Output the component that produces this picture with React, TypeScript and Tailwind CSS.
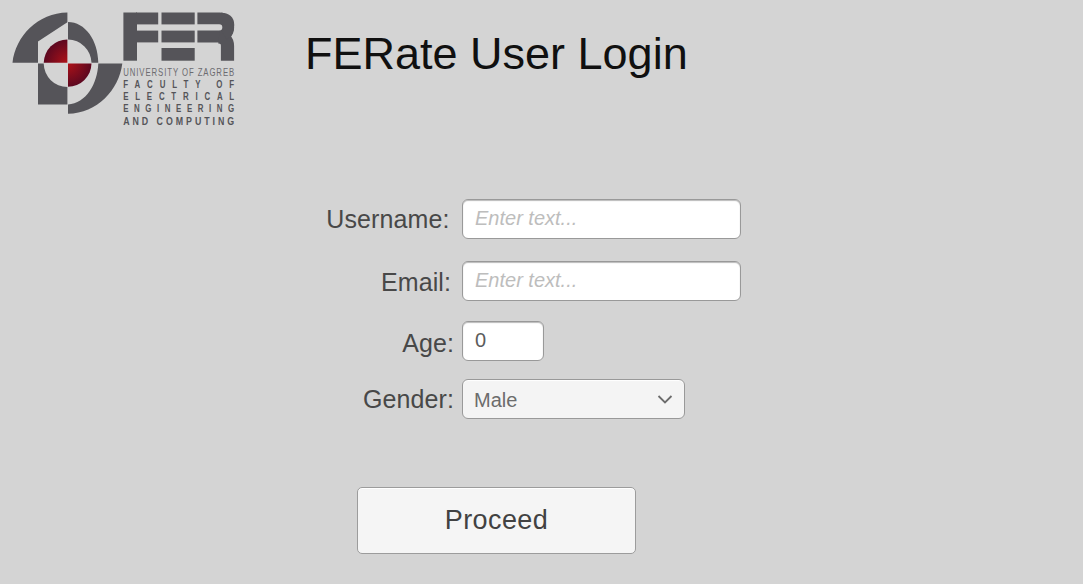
import type { ReactNode } from "react";

const GRAY = "#555459";

function Caption({ y, size, weight, sx, width, fill = GRAY, children }: { y: number; size: number; weight: number; sx: number; width: number; fill?: string; children: string }) {
  return (
    <text
      transform={`translate(123.2 ${y}) scale(${sx} 1)`}
      fontSize={size}
      fontWeight={weight}
      textLength={width / sx}
      lengthAdjust="spacing"
      fill={fill}
    >
      {children}
    </text>
  );
}

function Logo() {
  return (
    <svg className="block h-[130px] w-[240px] shrink-0 font-['Liberation_Sans',sans-serif]" viewBox="0 0 240 130" role="img" aria-label="FER">
      <defs>
        <radialGradient id="core" gradientUnits="userSpaceOnUse" cx="67.7" cy="63" r="24">
          <stop offset="0" stopColor="#b01218" />
          <stop offset="1" stopColor="#5c0820" />
        </radialGradient>
      </defs>
      <g fill={GRAY}>
        <path d="M67.4 12.5V22.3L38 41.6V62.8H12.5C15.5 36 38 13 67.4 12.5Z" />
        <path d="M68 22C85 22 98 40 98.3 62.8H91.5A23.8 23.8 0 0 0 68 39.5Z" />
        <path d="M38 63.6H43.7A23.8 23.8 0 0 0 67.4 87V104.4H38Z" />
        <path d="M98.3 63.6H122.3C119 90 97 113.5 68 113.8V104.5C86 103.5 97.5 84 98.3 63.6Z" />
      </g>
      <path d="M67.4 62.8H43.7A23.7 23.7 0 0 1 67.4 39.6Z" fill="url(#core)" />
      <path d="M68 63.6H91.5A23.7 23.7 0 0 1 68 86.8Z" fill="url(#core)" />
      <g fill={GRAY}>
        <rect x="123.4" y="12.5" width="13.6" height="48.2" />
        <rect x="136" y="12.5" width="22.2" height="11.9" />
        <rect x="136" y="30.6" width="22.2" height="11.8" />
        <rect x="161.5" y="12.5" width="33.2" height="11.9" />
        <rect x="161.5" y="30.6" width="33.2" height="11.8" />
        <rect x="161.5" y="48" width="33.2" height="12.7" />
      </g>
      <g fill="none" stroke={GRAY}>
        <path d="M197.4 18.45H219.5A9.03 9.03 0 0 1 219.5 36.5H197.4" strokeWidth="11.8" />
        <path d="M219 37Q227.5 38 227.5 46V60.7" strokeWidth="13.2" />
        <path d="M221 18Q229 18 229 25T224 35" strokeWidth="10.5" />
      </g>
      <Caption y={75.8} size={10.8} weight={400} sx={0.72} width={111} fill="#6c6b70">UNIVERSITY OF ZAGREB</Caption>
      <Caption y={88.2} size={11.3} weight={700} sx={0.7} width={111}>FACULTY OF</Caption>
      <Caption y={100.2} size={11.3} weight={700} sx={0.7} width={111}>ELECTRICAL</Caption>
      <Caption y={112.2} size={11.3} weight={700} sx={0.7} width={111}>ENGINEERING</Caption>
      <Caption y={125.2} size={11.3} weight={700} sx={0.78} width={111}>AND COMPUTING</Caption>
    </svg>
  );
}

function Row({ label, className, labelClass, children }: { label: string; className: string; labelClass: string; children: ReactNode }) {
  return (
    <div className={`flex h-10 items-start ${className}`}>
      <div className={`w-[462px] shrink-0 text-right text-[25px] leading-10 tracking-[0.1px] text-[#484848] ${labelClass}`}>{label}</div>
      {children}
    </div>
  );
}

const box =
  "h-10 rounded-[6px] border border-[#999999] bg-white px-3 pb-[2px] text-[20px] text-[#5c5c5c] shadow-[inset_0_1px_1px_#bbbbbb] outline-none";

export default function App() {
  return (
    <main className="h-[584px] w-[1083px] overflow-hidden bg-[#d4d4d4] font-['Liberation_Sans',Arial,sans-serif]">
      <header className="flex h-[199px] items-start">
        <Logo />
        <h1 className="ml-[65px] mt-[26px] whitespace-nowrap text-[45px] leading-[56px] text-[#101010]">FERate User Login</h1>
      </header>
      <form>
        <Row label="Username:" className="" labelClass="pr-[12.5px]">
          <input aria-label="Username" placeholder="Enter text..." className={`${box} w-[279px] italic placeholder:text-[#bdbdbd]`} />
        </Row>
        <Row label="Email:" className="mt-[22px]" labelClass="pr-[11px] pt-[1px]">
          <input aria-label="Email" placeholder="Enter text..." className={`${box} w-[279px] italic placeholder:text-[#bdbdbd]`} />
        </Row>
        <Row label="Age:" className="mt-5" labelClass="pr-[8px] pt-[2px]">
          <input aria-label="Age" defaultValue="0" className={`${box} w-[82px]`} />
        </Row>
        <Row label="Gender:" className="mt-[18px]" labelClass="pr-[8px]">
          <button type="button" className="flex h-10 w-[223px] items-center justify-between rounded-[6px] border border-[#999999] bg-[#f4f4f4] pl-[11px] pr-[11px] pt-[2px] text-[20px] text-[#6c6c6c] shadow-[inset_0_1px_1px_#ffffff]">
            Male
            <svg className="h-3 w-4" viewBox="0 0 16 12" fill="none" stroke="#6c6c6c" strokeWidth="1.8">
              <path d="M1.5 2L8 8.5L14.5 2" />
            </svg>
          </button>
        </Row>
        <button type="button" className="ml-[357px] mt-[68px] block h-[67px] w-[279px] rounded-[5px] border border-[#9c9c9c] bg-[#f5f5f5] text-[27px] tracking-[0.4px] text-[#424242] shadow-[inset_0_1px_0_#ffffff]">
          Proceed
        </button>
      </form>
    </main>
  );
}
